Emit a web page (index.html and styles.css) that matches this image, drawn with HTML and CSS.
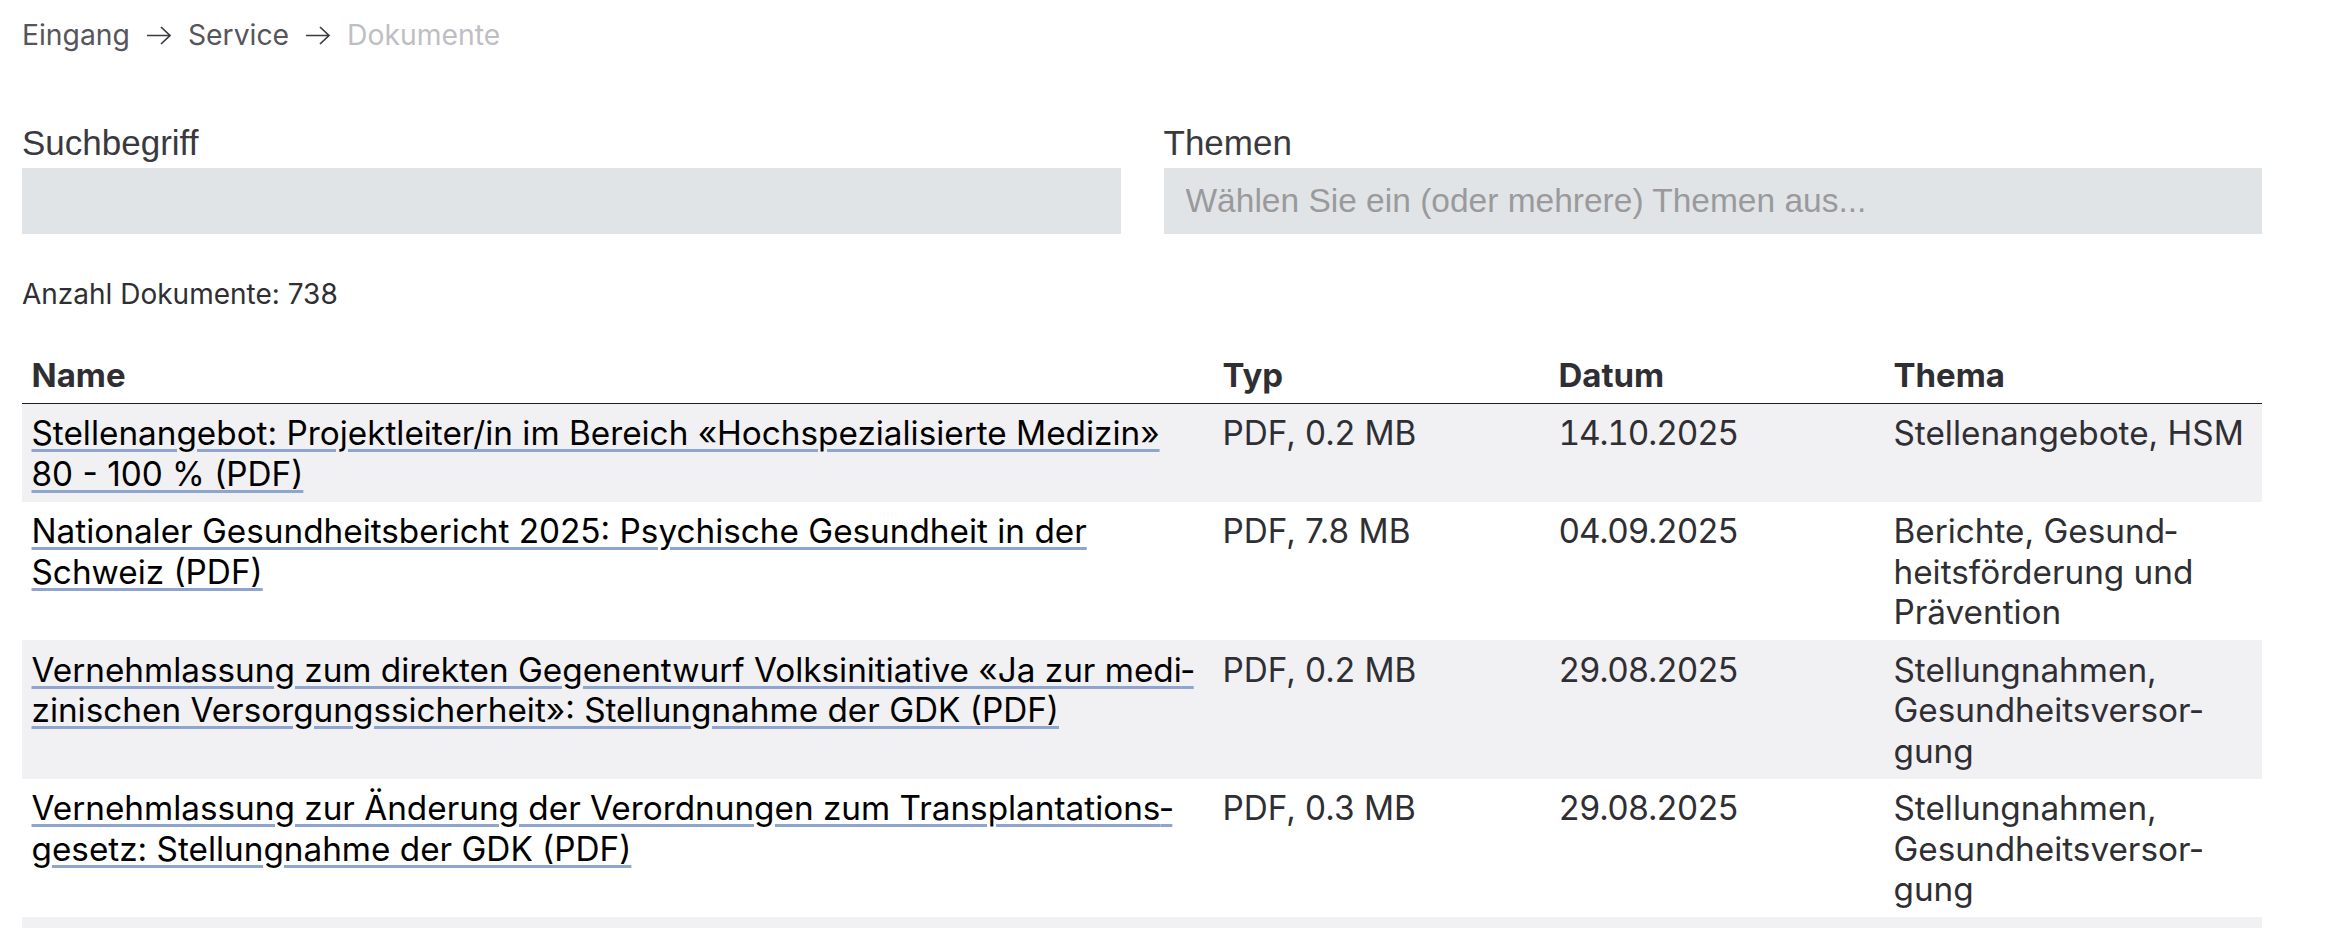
FILE: index.html
```html
<!DOCTYPE html>
<html lang="de">
<head>
<meta charset="utf-8">
<title>Dokumente</title>
<link rel="stylesheet" href="styles.css">
</head>
<body>
<div class="page">
  <nav class="breadcrumb">
    <a class="crumb" href="#">Eingang</a>
    <svg class="crumb-arrow" viewBox="0 0 26 21" width="26" height="21" aria-hidden="true"><path d="M1 10.5 H24 M15 2 L24 10.5 L15 19" fill="none" stroke="#3a3a40" stroke-width="1.7"/></svg>
    <a class="crumb" href="#">Service</a>
    <svg class="crumb-arrow" viewBox="0 0 26 21" width="26" height="21" aria-hidden="true"><path d="M1 10.5 H24 M15 2 L24 10.5 L15 19" fill="none" stroke="#3a3a40" stroke-width="1.7"/></svg>
    <span class="crumb crumb-current">Dokumente</span>
  </nav>

  <div class="filters">
    <div class="field">
      <label class="field-label" for="q">Suchbegriff</label>
      <input class="field-input" id="q" type="text">
    </div>
    <div class="field">
      <label class="field-label" for="t">Themen</label>
      <input class="field-input" id="t" type="text" placeholder="Wählen Sie ein (oder mehrere) Themen aus...">
    </div>
  </div>

  <p class="count">Anzahl Dokumente: 738</p>

  <table class="docs">
    <colgroup>
      <col class="col-name"><col class="col-type"><col class="col-date"><col class="col-topic">
    </colgroup>
    <thead>
      <tr><th>Name</th><th>Typ</th><th>Datum</th><th>Thema</th></tr>
    </thead>
    <tbody>
      <tr>
        <td><a class="doc-link" href="#">Stellenangebot: Projektleiter/in im Bereich «Hochspezialisierte Medizin» 80 - 100 % (PDF)</a></td>
        <td>PDF, 0.2 MB</td>
        <td class="cell-date">14.10.2025</td>
        <td>Stellenangebote, HSM</td>
      </tr>
      <tr>
        <td><a class="doc-link" href="#">Nationaler Gesundheitsbericht 2025: Psychische Gesundheit in der Schweiz (PDF)</a></td>
        <td>PDF, 7.8 MB</td>
        <td class="cell-date">04.09.2025</td>
        <td>Berichte, Gesund&shy;heitsförderung und Prävention</td>
      </tr>
      <tr>
        <td><a class="doc-link" href="#">Vernehmlassung zum direkten Gegenentwurf Volksinitiative «Ja zur medi&shy;zinischen Versorgungssicherheit»: Stellungnahme der GDK (PDF)</a></td>
        <td>PDF, 0.2 MB</td>
        <td class="cell-date">29.08.2025</td>
        <td>Stellungnahmen, Gesundheitsversor&shy;gung</td>
      </tr>
      <tr>
        <td><a class="doc-link" href="#">Vernehmlassung zur Änderung der Verordnungen zum Transplantations&shy;gesetz: Stellungnahme der GDK (PDF)</a></td>
        <td>PDF, 0.3 MB</td>
        <td class="cell-date">29.08.2025</td>
        <td>Stellungnahmen, Gesundheitsversor&shy;gung</td>
      </tr>
      <tr class="row-partial">
        <td></td><td></td><td></td><td></td>
      </tr>
    </tbody>
  </table>
</div>
</body>
</html>
```

FILE: styles.css
```css
html, body {
  margin: 0;
  padding: 0;
  background: #ffffff;
}

body {
  font-family: "Inter", "Liberation Sans", sans-serif;
  color: #2f2f33;
}

.page {
  width: 2240px;
  padding: 16px 0 0 22px;
}

.breadcrumb {
  display: flex;
  align-items: center;
  gap: 16px;
  font-size: 28.3px;
  line-height: 39px;
}

.crumb {
  color: #55555c;
  text-decoration: none;
}

.crumb-current {
  color: #bfbec4;
}

.crumb-arrow {
  display: block;
  flex: none;
}

.filters {
  display: grid;
  grid-template-columns: 1fr 1fr;
  column-gap: 43px;
  margin-top: 62px;
}

.field {
  display: flex;
  flex-direction: column;
}

.field-label {
  font-family: "Liberation Sans", Arial, sans-serif;
  font-size: 35px;
  line-height: 50px;
  padding-top: 1px;
  color: #3a3a3e;
}

.field-input {
  box-sizing: border-box;
  width: 100%;
  height: 66px;
  border: none;
  outline: none;
  margin: 0;
  padding: 0 22px;
  background: #e1e4e6;
  font-family: "Liberation Sans", Arial, sans-serif;
  font-size: 33.5px;
  color: #333;
}

.field-input::placeholder {
  color: #9a9a9c;
  opacity: 1;
}

.count {
  margin: 41px 0 0;
  font-size: 28px;
  line-height: 39px;
  color: #2f2f33;
}

.docs {
  width: 100%;
  margin-top: 38.5px;
  border-collapse: collapse;
  table-layout: fixed;
}

.col-name { width: 1191px; }
.col-type { width: 336px; }
.col-date { width: 335px; }
.col-topic { width: 378px; }

.docs th {
  text-align: left;
  font-size: 33px;
  font-weight: 700;
  line-height: 45px;
  padding: 0 9.5px 5px;
  color: #2f2f33;
  border-bottom: 1px solid #1e1e22;
}

.docs td {
  vertical-align: top;
  font-size: 33.3px;
  line-height: 40.5px;
  padding: 9.5px 9.5px 7.5px;
  color: #2f2f33;
  hyphens: manual;
}

.docs td.cell-date {
  font-variant-numeric: tabular-nums;
  letter-spacing: -1.1px;
}

.docs tbody tr:nth-child(odd) td {
  background: #f1f0f3;
}

.docs .row-partial td {
  height: 11px;
  padding: 0;
}

.doc-link {
  color: #000000;
  text-decoration: underline;
  text-decoration-color: #8ea6cf;
  text-decoration-thickness: 3px;
  text-underline-offset: 4px;
}
```
